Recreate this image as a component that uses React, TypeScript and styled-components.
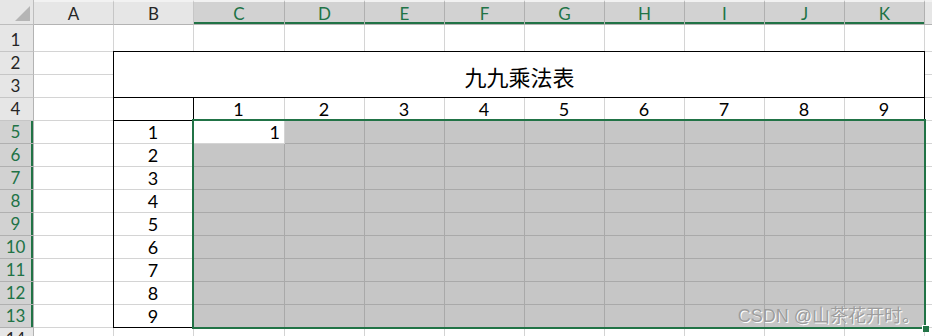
import React from "react";
import styled, { createGlobalStyle } from "styled-components";

const GlobalStyle = createGlobalStyle`
  html, body {
    margin: 0;
    padding: 0;
    background: #ffffff;
    overflow: hidden;
  }
  body {
    font-family: "Lato", "Noto Sans CJK SC", sans-serif;
  }
`;

const COLS = ["A", "B", "C", "D", "E", "F", "G", "H", "I", "J", "K", "L"];
const ROWS = [1, 2, 3, 4, 5, 6, 7, 8, 9, 10, 11, 12, 13, 14];
const GREEN = "#217346";

// selection C5:K13 -> col index 2..10, rows 5..13
const isSelCol = (c: number) => c >= 2 && c <= 10;
const isSelRow = (r: number) => r >= 5 && r <= 13;

type Align = "left" | "center" | "right";

const App: React.FC = () => {
  return (
    <Page>
      <GlobalStyle />
      <Sheet>
        <Corner>
          <svg width="34" height="25" viewBox="0 0 34 25">
            <polygon points="30,6 30,21 15,21" fill="#b5b5b5" />
          </svg>
        </Corner>
        {COLS.map((c, i) => (
          <ColHead key={c} $col={i + 2} selected={isSelCol(i)}>
            {c === "L" ? "" : c}
          </ColHead>
        ))}

        {ROWS.map((r) => (
          <React.Fragment key={r}>
            <RowHead $row={r + 1} selected={isSelRow(r)}>
              {r}
            </RowHead>
            {COLS.map((c, i) => {
              // B2:K3 is the merged title
              if ((r === 2 || r === 3) && i >= 1 && i <= 10) return null;
              const sel = isSelRow(r) && isSelCol(i) && !(r === 5 && i === 2);
              let content: React.ReactNode = null;
              let align: Align = "center";
              if (r === 4 && isSelCol(i)) content = i - 1;
              if (i === 1 && isSelRow(r)) content = r - 4;
              if (r === 5 && i === 2) {
                content = 1;
                align = "right";
              }
              return (
                <Cell key={c} $col={i + 2} $row={r + 1} shaded={sel} align={align}>
                  {content}
                </Cell>
              );
            })}
          </React.Fragment>
        ))}

        <Title>九九乘法表</Title>

        <Frame col="3 / 13" row="3 / 5" />
        <Frame col="3 / 13" row="5 / 6" />
        <Frame col="3 / 4" row="5 / 6" />
        <Frame col="3 / 4" row="6 / 15" />

        <Selection>
          <FillHandle />
        </Selection>
      </Sheet>
      <Watermark>CSDN @山茶花开时。</Watermark>
    </Page>
  );
};

export default App;

const Page = styled.div`
  position: relative;
  width: 932px;
  height: 336px;
  overflow: hidden;
`;

const Sheet = styled.div`
  display: grid;
  grid-template-columns: 34px 80px 80px 91px repeat(8, 80px) 1fr;
  grid-template-rows: 25px 27px repeat(13, 23px);
  width: 932px;
`;

const Corner = styled.div`
  grid-column: 1;
  grid-row: 1;
  box-sizing: border-box;
  background: #e6e6e6;
  border-right: 1px solid #bdbdbd;
  border-bottom: 1px solid #bdbdbd;
  svg {
    display: block;
  }
`;

const ColHead = styled.div<{ selected: boolean; $col: number }>`
  grid-column: ${(p) => p.$col};
  grid-row: 1;
  box-sizing: border-box;
  display: flex;
  align-items: center;
  justify-content: center;
  padding-top: 1px;
  background: ${(p) => (p.selected ? "#d2d2d2" : "#e6e6e6")};
  color: ${(p) => (p.selected ? GREEN : "#262626")};
  border-right: 1px solid ${(p) => (p.selected ? "#b0b0b0" : "#c6c6c6")};
  border-bottom: 1px solid #b3b3b3;
  box-shadow: ${(p) => (p.selected ? `inset 0 -2px 0 ${GREEN}` : "none")};
  border-top: 2px solid #f2f2f2;
  font-size: 17px;
`;

const RowHead = styled.div<{ selected: boolean; $row: number }>`
  grid-column: 1;
  grid-row: ${(p) => p.$row};
  box-sizing: border-box;
  display: flex;
  align-items: flex-end;
  justify-content: center;
  padding-bottom: 1px;
  padding-right: 2px;
  background: ${(p) => (p.selected ? "#d2d2d2" : "#e6e6e6")};
  color: ${(p) => (p.selected ? GREEN : "#262626")};
  border-right: 1px solid #b3b3b3;
  border-bottom: 1px solid ${(p) => (p.selected ? "#b0b0b0" : "#c6c6c6")};
  box-shadow: ${(p) => (p.selected ? `inset -2px 0 0 ${GREEN}` : "none")};
  font-size: 17px;
  line-height: 20px;
`;

const Cell = styled.div<{ shaded: boolean; align: Align; $col: number; $row: number }>`
  grid-column: ${(p) => p.$col};
  grid-row: ${(p) => p.$row};
  box-sizing: border-box;
  display: flex;
  align-items: flex-end;
  justify-content: ${(p) =>
    p.align === "right" ? "flex-end" : p.align === "left" ? "flex-start" : "center"};
  padding: 0 4px 0 3px;
  background: ${(p) => (p.shaded ? "#c6c6c6" : "#ffffff")};
  border-right: 1px solid ${(p) => (p.shaded ? "#a9a9a9" : "#d4d4d4")};
  border-bottom: 1px solid ${(p) => (p.shaded ? "#a9a9a9" : "#d4d4d4")};
  color: #000;
  font-size: 18px;
  line-height: 21px;
`;

const Title = styled.div`
  grid-column: 3 / 13;
  grid-row: 3 / 5;
  display: flex;
  align-items: center;
  justify-content: center;
  background: #fff;
  font-family: "Noto Sans CJK SC", sans-serif;
  font-size: 22px;
  color: #000;
  padding-top: 1px;
`;

const Frame = styled.div<{ col: string; row: string }>`
  grid-column: ${(p) => p.col};
  grid-row: ${(p) => p.row};
  margin: -1px 0 0 -1px;
  border: 1px solid #000;
  pointer-events: none;
  z-index: 2;
`;

const Selection = styled.div`
  grid-column: 4 / 13;
  grid-row: 6 / 15;
  position: relative;
  margin: -2px -1px -1px -2px;
  border: 2px solid ${GREEN};
  pointer-events: none;
  z-index: 3;
`;

const FillHandle = styled.div`
  position: absolute;
  right: -5px;
  bottom: -5px;
  width: 6px;
  height: 6px;
  background: ${GREEN};
  border: 1px solid #fff;
  border-right: none;
  border-bottom: none;
`;

const Watermark = styled.div`
  position: absolute;
  right: 12px;
  bottom: 9px;
  font-family: "Liberation Sans", "Noto Sans CJK SC", sans-serif;
  font-size: 18px;
  color: #9d9d9d;
  text-shadow: 1px 1px 0 #ffffff;
  z-index: 4;
  white-space: nowrap;
`;
